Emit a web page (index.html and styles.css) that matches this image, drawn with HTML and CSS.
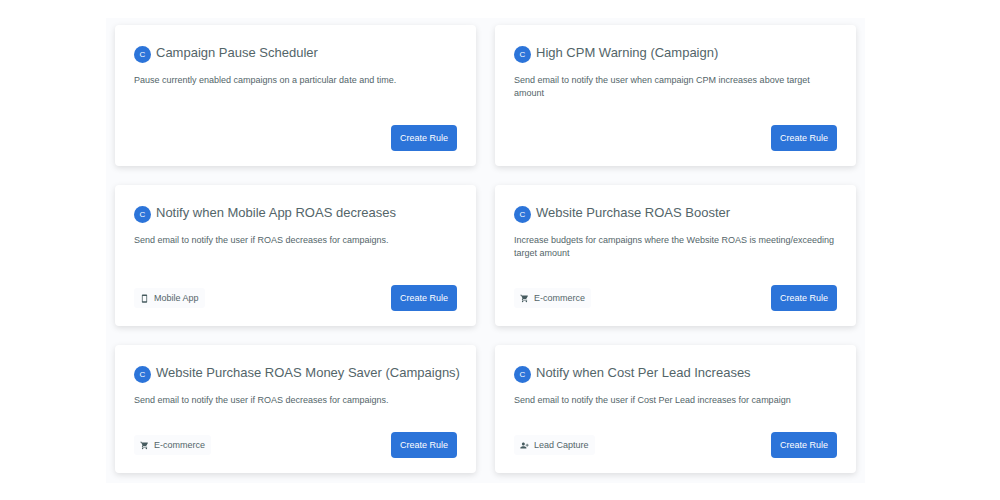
FILE: index.html
```
<!DOCTYPE html>
<html lang="en">
<head>
  <meta charset="utf-8">
  <title>Rule Templates</title>
  <link rel="stylesheet" href="styles.css">
</head>
<body>
  <svg class="sprite" aria-hidden="true">
    <symbol id="icon-phone" viewBox="0 0 24 24">
      <path d="M17 1H7C5.900 1 5 1.900 5 3v18c0 1.100.900 2 2 2h10c1.100 0 2-.900 2-2V3c0-1.100-.900-2-2-2zm0 18H7V5h10v14z"/>
    </symbol>
    <symbol id="icon-cart" viewBox="0 0 24 24">
      <path d="M7 18c-1.100 0-2 .900-2 2s.900 2 2 2 2-.900 2-2-.900-2-2-2zM1 2v2h2l3.600 7.600-1.350 2.450C4.520 15.370 5.480 17 7 17h12v-2H7.420l-.120-.370.900-1.630h7.450c.750 0 1.410-.410 1.750-1.030L21 5.500C21.400 4.800 20.900 4 20.100 4H5.210L4.270 2H1zm16 16c-1.100 0-2 .900-2 2s.900 2 2 2 2-.900 2-2-.900-2-2-2z"/>
    </symbol>
    <symbol id="icon-lead" viewBox="0 0 24 24">
      <path d="M13 8c0-2.210-1.790-4-4-4S5 5.790 5 8s1.790 4 4 4 4-1.790 4-4zm2 2v2h3v3h2v-3h3v-2h-3V7h-2v3h-3zM1 18v2h16v-2c0-2.660-5.330-4-8-4s-8 1.340-8 4z"/>
    </symbol>
  </svg>

  <main class="rules">
    <article class="card">
      <h2 class="card-title"><span class="badge">C</span>Campaign Pause Scheduler</h2>
      <p class="card-text">Pause currently enabled campaigns on a particular date and time.</p>
      <div class="card-footer">
        <button type="button" class="create-btn">Create Rule</button>
      </div>
    </article>

    <article class="card">
      <h2 class="card-title"><span class="badge">C</span>High CPM Warning (Campaign)</h2>
      <p class="card-text">Send email to notify the user when campaign CPM increases above target amount</p>
      <div class="card-footer">
        <button type="button" class="create-btn">Create Rule</button>
      </div>
    </article>

    <article class="card">
      <h2 class="card-title"><span class="badge">C</span>Notify when Mobile App ROAS decreases</h2>
      <p class="card-text">Send email to notify the user if ROAS decreases for campaigns.</p>
      <div class="card-footer">
        <span class="tag"><svg class="icon"><use href="#icon-phone"/></svg>Mobile App</span>
        <button type="button" class="create-btn">Create Rule</button>
      </div>
    </article>

    <article class="card">
      <h2 class="card-title"><span class="badge">C</span>Website Purchase ROAS Booster</h2>
      <p class="card-text">Increase budgets for campaigns where the Website ROAS is meeting/exceeding target amount</p>
      <div class="card-footer">
        <span class="tag"><svg class="icon"><use href="#icon-cart"/></svg>E-commerce</span>
        <button type="button" class="create-btn">Create Rule</button>
      </div>
    </article>

    <article class="card">
      <h2 class="card-title"><span class="badge">C</span>Website Purchase ROAS Money Saver (Campaigns)</h2>
      <p class="card-text">Send email to notify the user if ROAS decreases for campaigns.</p>
      <div class="card-footer">
        <span class="tag"><svg class="icon"><use href="#icon-cart"/></svg>E-commerce</span>
        <button type="button" class="create-btn">Create Rule</button>
      </div>
    </article>

    <article class="card">
      <h2 class="card-title"><span class="badge">C</span>Notify when Cost Per Lead Increases</h2>
      <p class="card-text">Send email to notify the user if Cost Per Lead increases for campaign</p>
      <div class="card-footer">
        <span class="tag"><svg class="icon"><use href="#icon-lead"/></svg>Lead Capture</span>
        <button type="button" class="create-btn">Create Rule</button>
      </div>
    </article>
  </main>
</body>
</html>
```
FILE: styles.css
```
body {
  margin: 0;
  font-family: "Liberation Sans", Arial, sans-serif;
  font-size: 9px;
  color: #536569;
  background-color: #fff;
}

.sprite {
  display: none;
}

.rules {
  display: grid;
  grid-template-columns: 1fr 1fr;
  gap: 19px;
  margin: 18px 135px 0 106px;
  padding: 7px 9px 10px;
  background-color: #fafbfd;
}

.card {
  display: flex;
  flex-direction: column;
  min-width: 0;
  padding: 19px 19px 15px;
  border-radius: 4px;
  background-color: #fff;
  box-shadow: 0 2px 6px rgba(0, 0, 0, 0.12);
}

.card-title {
  display: flex;
  gap: 5px;
  margin: 0 0 11px;
  font-size: 13px;
  font-weight: normal;
  line-height: 17px;
  white-space: nowrap;
}

.badge {
  flex: none;
  width: 17px;
  height: 17px;
  margin-top: 2px;
  border-radius: 50%;
  background-color: #2c74d9;
  color: #fff;
  font-size: 8px;
  line-height: 17px;
  text-align: center;
}

.card-text {
  margin: 0 0 25px;
  line-height: 13px;
}

.card-footer {
  display: flex;
  align-items: center;
  margin-top: auto;
}

.tag {
  display: flex;
  align-items: center;
  gap: 5px;
  padding: 0 6px;
  border-radius: 3px;
  background-color: #fafbfd;
  line-height: 20px;
}

.icon {
  width: 9px;
  height: 9px;
  fill: #465b5f;
}

.create-btn {
  height: 26px;
  margin-left: auto;
  padding: 0 9px;
  border: none;
  border-radius: 4px;
  background-color: #2c74d9;
  color: #fff;
  font-family: inherit;
  font-size: 9px;
  cursor: pointer;
}

.create-btn:hover {
  background-color: #2363bd;
}
```
